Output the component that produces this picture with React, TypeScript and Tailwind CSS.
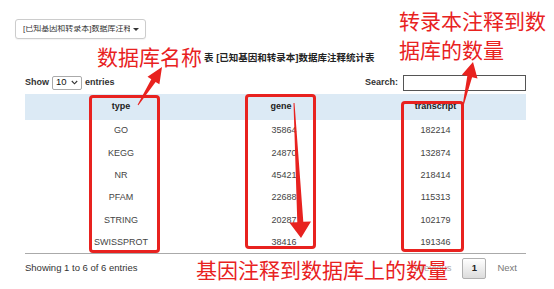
import React from "react";

const rows = [
  ["GO", "35864", "182214"],
  ["KEGG", "24870", "132874"],
  ["NR", "45421", "218414"],
  ["PFAM", "22688", "115313"],
  ["STRING", "20287", "102179"],
  ["SWISSPROT", "38416", "191346"],
];

export default function App() {
  return (
    <div className="relative w-[554px] h-[289px] overflow-hidden bg-white text-[#333] font-['Liberation_Sans','Noto_Sans_CJK_SC',sans-serif]">
      {/* dropdown */}
      <div className="pt-[19px] pl-[15px]">
        <div className="flex items-center w-[131px] h-[20px] border border-[#ccc] rounded-[3px] bg-white pl-[7px] pr-[6px] shadow-[0_1px_1px_rgba(0,0,0,0.05)]">
          <span className="flex-1 overflow-hidden whitespace-nowrap text-[8px] leading-none text-[#333]">[已知基因和转录本]数据库注释统计表</span>
          <span className="ml-[3px] w-0 h-0 border-l-[3px] border-r-[3px] border-t-[3px] border-l-transparent border-r-transparent border-t-[#333]"></span>
        </div>
      </div>

      {/* caption */}
      <div className="mt-[12px] h-[14px] pl-[204px] text-[9.5px] leading-[14px] font-bold text-[#222] whitespace-nowrap">
        表 [已知基因和转录本]数据库注释统计表
      </div>

      {/* controls */}
      <div className="mt-[9px] mx-[25px] w-[501px] h-[17px] flex items-center justify-between text-[9px] font-bold text-[#333]">
        <div className="flex items-center gap-[3px]">
          <span>Show</span>
          <span className="flex items-center justify-between w-[30px] h-[14px] border border-[#aaa] rounded-[2px] bg-white px-[3px] font-normal text-[9.5px] text-[#111]">
            <span>10</span>
            <svg width="7" height="5" viewBox="0 0 7 5"><path d="M0.8 1 L3.5 3.8 L6.2 1" fill="none" stroke="#333" strokeWidth="1.1" /></svg>
          </span>
          <span>entries</span>
        </div>
        <div className="flex items-center gap-[5px]">
          <span>Search:</span>
          <span className="block w-[123px] h-[16px] border border-[#555] bg-white"></span>
        </div>
      </div>

      {/* table */}
      <table className="mt-[3px] ml-[25px] w-[501px] border-collapse text-[9px] text-[#444]">
        <thead>
          <tr className="h-[26px] bg-[#dceaf5] text-[#222]">
            <th className="w-[192px] font-bold text-center align-middle">type</th>
            <th className="w-[128px] font-bold text-center align-middle">gene</th>
            <th className="w-[181px] font-bold text-center align-middle">transcript</th>
          </tr>
        </thead>
        <tbody className="border-b-[1.5px] border-[#aaa]">
          {rows.map((r) => (
            <tr key={r[0]} className="h-[22.3px]">
              <td className="text-center align-middle">{r[0]}</td>
              <td className="text-center align-middle pl-[6px]">{r[1]}</td>
              <td className="text-center align-middle">{r[2]}</td>
            </tr>
          ))}
        </tbody>
      </table>

      {/* footer */}
      <div className="mt-[4px] mx-[25px] w-[501px] h-[20px] flex items-center justify-between text-[9.5px]">
        <span className="text-[#333]">Showing 1 to 6 of 6 entries</span>
        <div className="flex items-center">
          <span className="text-[#aaa] mr-[11px]">Previous</span>
          <span className="flex items-center justify-center w-[24px] h-[21px] border border-[#b0b0b0] rounded-[2px] bg-gradient-to-b from-white to-[#dcdcdc] font-bold text-[#222]">1</span>
          <span className="ml-[11px] mr-[9px] text-[#777]">Next</span>
        </div>
      </div>

      {/* red boxes */}
      <div className="absolute left-[89px] top-[95px] w-[71px] h-[158px] border-[3px] border-[#e8221f] rounded-[4px]"></div>
      <div className="absolute left-[245px] top-[94px] w-[71px] h-[155px] border-[3px] border-[#e8221f] rounded-[4px]"></div>
      <div className="absolute left-[401px] top-[101px] w-[63px] h-[151px] border-[3px] border-[#e8221f] rounded-[4px]"></div>

      {/* red annotations */}
      <div className="absolute left-[97px] top-[44px] text-[21px] leading-[24px] text-[#e8221f] font-['Noto_Sans_CJK_SC',sans-serif] whitespace-nowrap">数据库名称</div>
      <div className="absolute left-[399px] top-[6px] text-[21px] leading-[29px] text-[#e8221f] font-['Noto_Sans_CJK_SC',sans-serif]">
        <div className="whitespace-nowrap">转录本注释到数</div>
        <div className="whitespace-nowrap">据库的数量</div>
      </div>
      <div className="absolute left-[196px] top-[257px] text-[21px] leading-[24px] text-[#e8221f] font-['Noto_Sans_CJK_SC',sans-serif] whitespace-nowrap">基因注释到数据库上的数量</div>

      {/* arrows */}
      <svg className="absolute left-0 top-0 pointer-events-none" width="554" height="289" viewBox="0 0 554 289">
        <polygon fill="#e8221f" points="137.6,104.7 151.3,79.2 147.5,76.8 162,67 159.4,84.3 155.6,81.9 138.4,105.3" />
        <polygon fill="#e8221f" points="462.5,105.9 467.3,76 461.9,74.8 473,62 477.5,78.4 472.1,77.2 463.5,106.1" />
        <polygon fill="#e8221f" points="293.5,103 297.3,222.2 289.3,222.6 301,238 311,221.4 303.3,221.8 294.5,103" />
      </svg>
    </div>
  );
}
